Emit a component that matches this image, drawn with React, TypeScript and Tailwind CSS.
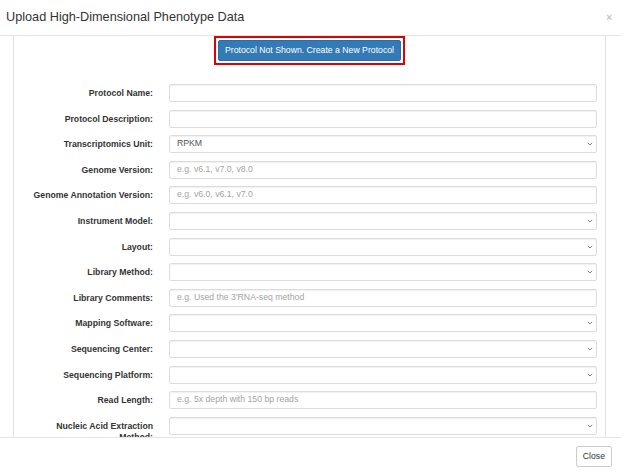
import React from 'react'

type Field = {
  label: string
  kind: 'input' | 'select'
  value?: string
  placeholder?: string
}

const fields: Field[] = [
  { label: 'Protocol Name:', kind: 'input' },
  { label: 'Protocol Description:', kind: 'input' },
  { label: 'Transcriptomics Unit:', kind: 'select', value: 'RPKM' },
  { label: 'Genome Version:', kind: 'input', placeholder: 'e.g. v6.1, v7.0, v8.0' },
  { label: 'Genome Annotation Version:', kind: 'input', placeholder: 'e.g. v6.0, v6.1, v7.0' },
  { label: 'Instrument Model:', kind: 'select' },
  { label: 'Layout:', kind: 'select' },
  { label: 'Library Method:', kind: 'select' },
  { label: 'Library Comments:', kind: 'input', placeholder: "e.g. Used the 3'RNA-seq method" },
  { label: 'Mapping Software:', kind: 'select' },
  { label: 'Sequencing Center:', kind: 'select' },
  { label: 'Sequencing Platform:', kind: 'select' },
  { label: 'Read Length:', kind: 'input', placeholder: 'e.g. 5x depth with 150 bp reads' },
  { label: 'Nucleic Acid Extraction Method:', kind: 'select' },
]

function Chevron() {
  return (
    <svg width="6" height="4" viewBox="0 0 6 4" className="absolute right-[3px] top-1/2 -translate-y-1/2">
      <path d="M0.8 0.8 L3 3 L5.2 0.8" fill="none" stroke="#808080" strokeWidth="1" />
    </svg>
  )
}

function FormRow({ field }: { field: Field }) {
  return (
    <div className="flex items-start">
      <label className="ml-[9px] w-[130px] shrink-0 pt-[4px] text-right text-[8.7px] font-bold leading-[11px] text-[#333]">
        {field.label}
      </label>
      <div className="relative ml-[16px] h-[18px] w-[428px] shrink-0 rounded-[2px] border border-[#dcdcdc] bg-white shadow-[inset_0_1px_1px_rgba(0,0,0,0.06)]">
        {field.value && (
          <span className="absolute left-[7px] top-1/2 -translate-y-1/2 text-[8.7px] text-[#555]">{field.value}</span>
        )}
        {field.placeholder && (
          <span className="absolute left-[7px] top-1/2 -translate-y-1/2 text-[8.7px] text-[#a3a3a3]">{field.placeholder}</span>
        )}
        {field.kind === 'select' && <Chevron />}
      </div>
    </div>
  )
}

export default function App() {
  return (
    <div className="h-[474px] w-[625px] overflow-hidden bg-white" style={{ fontFamily: '"Liberation Sans", Arial, sans-serif' }}>
      <div className="flex h-[474px] w-[621px] flex-col bg-white">
        {/* Header */}
        <div className="flex h-[36px] shrink-0 items-center justify-between border-b border-[#e5e5e5] pl-[6px] pr-[9px]">
          <h4 className="text-[12.7px] text-[#333]">Upload High-Dimensional Phenotype Data</h4>
          <span className="text-[10px] font-bold leading-none text-[#c4c4c4]">×</span>
        </div>

        {/* Body */}
        <div className="min-h-0 flex-1 overflow-hidden">
          <div className="ml-[13px] h-full w-[593px] border-x border-[#e3e3e3]">
            <div className="flex justify-center">
              <div className="border-2 border-[#e00000] p-[2px]">
                <button className="block h-[21px] w-[183px] rounded-[2px] border border-[#2e6da4] bg-[#337ab7] text-[8.7px] leading-none text-white">
                  Protocol Not Shown. Create a New Protocol
                </button>
              </div>
            </div>

            <div className="mt-[19px] flex flex-col gap-[7.6px]">
              {fields.map((f) => (
                <FormRow key={f.label} field={f} />
              ))}
            </div>
          </div>
        </div>

        {/* Footer */}
        <div className="flex h-[37px] shrink-0 items-center justify-end border-t border-[#e5e5e5] pr-[9px]">
          <button className="block h-[21px] rounded-[2px] border border-[#ccc] bg-white px-[6px] text-[8.7px] leading-none text-[#333]">
            Close
          </button>
        </div>
      </div>
    </div>
  )
}
